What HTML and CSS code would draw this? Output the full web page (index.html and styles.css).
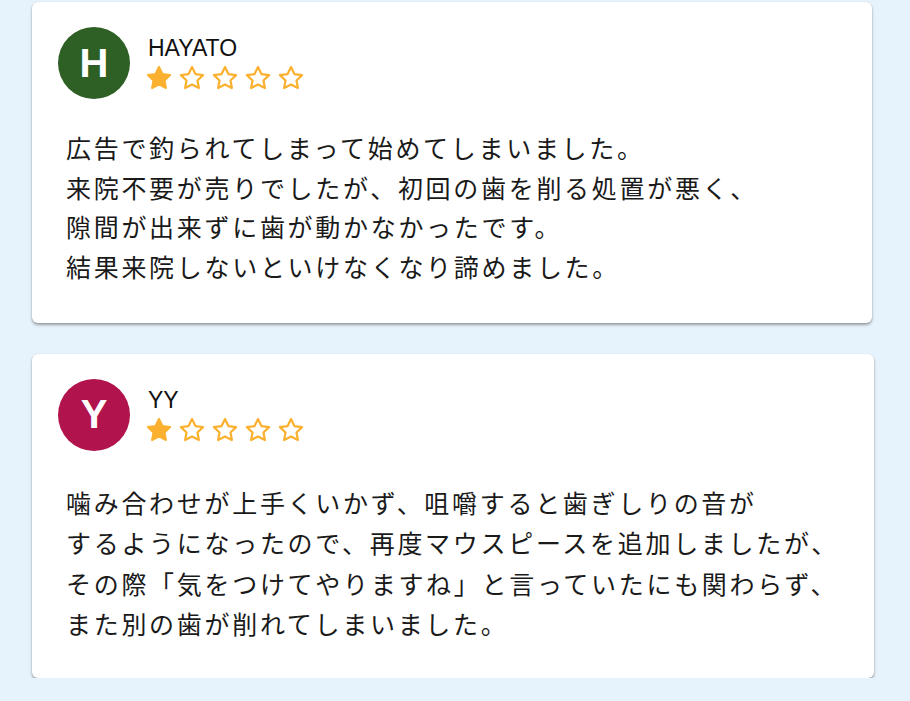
FILE: index.html
```
<!DOCTYPE html>
<html lang="ja">
<head>
<meta charset="utf-8">
<title>Reviews</title>
<link rel="stylesheet" href="styles.css">
</head>
<body>
<main class="reviews">
  <article class="card card-a">
    <header class="card-head">
      <div class="avatar avatar-green">H</div>
      <div class="meta">
        <div class="name">HAYATO</div>
        <div class="stars">
          <svg class="star" viewBox="0 0 24 24"><path class="fill" d="M12 2.6l2.9 6 6.6.9-4.8 4.6 1.2 6.5L12 17.5l-5.9 3.1 1.2-6.5-4.8-4.6 6.6-.9z"/></svg>
          <svg class="star" viewBox="0 0 24 24"><path class="empty" d="M12 2.6l2.9 6 6.6.9-4.8 4.6 1.2 6.5L12 17.5l-5.9 3.1 1.2-6.5-4.8-4.6 6.6-.9z"/></svg>
          <svg class="star" viewBox="0 0 24 24"><path class="empty" d="M12 2.6l2.9 6 6.6.9-4.8 4.6 1.2 6.5L12 17.5l-5.9 3.1 1.2-6.5-4.8-4.6 6.6-.9z"/></svg>
          <svg class="star" viewBox="0 0 24 24"><path class="empty" d="M12 2.6l2.9 6 6.6.9-4.8 4.6 1.2 6.5L12 17.5l-5.9 3.1 1.2-6.5-4.8-4.6 6.6-.9z"/></svg>
          <svg class="star" viewBox="0 0 24 24"><path class="empty" d="M12 2.6l2.9 6 6.6.9-4.8 4.6 1.2 6.5L12 17.5l-5.9 3.1 1.2-6.5-4.8-4.6 6.6-.9z"/></svg>
        </div>
      </div>
    </header>
    <p class="body">広告で釣られてしまって始めてしまいました。<br>来院不要が売りでしたが、初回の歯を削る処置が悪く、<br>隙間が出来ずに歯が動かなかったです。<br>結果来院しないといけなくなり諦めました。</p>
  </article>
  <article class="card card-b">
    <header class="card-head">
      <div class="avatar avatar-red">Y</div>
      <div class="meta">
        <div class="name">YY</div>
        <div class="stars">
          <svg class="star" viewBox="0 0 24 24"><path class="fill" d="M12 2.6l2.9 6 6.6.9-4.8 4.6 1.2 6.5L12 17.5l-5.9 3.1 1.2-6.5-4.8-4.6 6.6-.9z"/></svg>
          <svg class="star" viewBox="0 0 24 24"><path class="empty" d="M12 2.6l2.9 6 6.6.9-4.8 4.6 1.2 6.5L12 17.5l-5.9 3.1 1.2-6.5-4.8-4.6 6.6-.9z"/></svg>
          <svg class="star" viewBox="0 0 24 24"><path class="empty" d="M12 2.6l2.9 6 6.6.9-4.8 4.6 1.2 6.5L12 17.5l-5.9 3.1 1.2-6.5-4.8-4.6 6.6-.9z"/></svg>
          <svg class="star" viewBox="0 0 24 24"><path class="empty" d="M12 2.6l2.9 6 6.6.9-4.8 4.6 1.2 6.5L12 17.5l-5.9 3.1 1.2-6.5-4.8-4.6 6.6-.9z"/></svg>
          <svg class="star" viewBox="0 0 24 24"><path class="empty" d="M12 2.6l2.9 6 6.6.9-4.8 4.6 1.2 6.5L12 17.5l-5.9 3.1 1.2-6.5-4.8-4.6 6.6-.9z"/></svg>
        </div>
      </div>
    </header>
    <p class="body body-b">噛み合わせが上手くいかず、咀嚼すると歯ぎしりの音が<br>するようになったので、再度マウスピースを追加しましたが、<br>その際「気をつけてやりますね」と言っていたにも関わらず、<br>また別の歯が削れてしまいました。</p>
  </article>
</main>
</body>
</html>
```
FILE: styles.css
```
html, body {
  margin: 0;
  padding: 0;
  background: #e7f3fc;
}
body {
  font-family: "Noto Sans CJK JP", "Noto Sans", sans-serif;
  color: #1a1a1a;
}
.reviews {
  display: flex;
  flex-direction: column;
  align-items: flex-start;
  gap: 31px;
  padding: 2px 0 0 32px;
}
.card {
  box-sizing: border-box;
  background: #fff;
  border-radius: 6px;
  box-shadow: 0 2px 3px rgba(0, 0, 0, 0.35), 0 0 1px rgba(0, 0, 0, 0.12);
  padding: 25px 26px 36px 26px;
}
.card-a { width: 840px; }
.card-b { width: 842px; padding-bottom: 34px; }
.card-head {
  display: flex;
  align-items: flex-start;
  gap: 18px;
}
.avatar {
  width: 72px;
  height: 72px;
  border-radius: 50%;
  display: flex;
  align-items: center;
  justify-content: center;
  color: #fff;
  font-family: "Liberation Sans", Arial, sans-serif;
  font-weight: bold;
  font-size: 40px;
}
.avatar-green { background: #2e5f24; }
.avatar-red { background: #b1144d; }
.meta {
  padding-top: 8px;
}
.name {
  font-family: "Liberation Sans", Arial, sans-serif;
  font-size: 23px;
  line-height: 26px;
  color: #111;
}
.stars {
  display: flex;
  gap: 5px;
  margin-top: 3px;
  margin-left: -3px;
}
.star {
  width: 28px;
  height: 28px;
  display: block;
}
.star .fill {
  fill: #fbb12f;
  stroke: #fbb12f;
  stroke-width: 1.8;
  stroke-linejoin: round;
}
.star .empty {
  fill: none;
  stroke: #fbb12f;
  stroke-width: 1.9;
  stroke-linejoin: round;
}
.body {
  margin: 29px 0 0 8px;
  font-size: 25px;
  line-height: 39.7px;
  letter-spacing: 2.7px;
  white-space: nowrap;
}
.body-b {
  margin-top: 31px;
  line-height: 40.5px;
}
```
